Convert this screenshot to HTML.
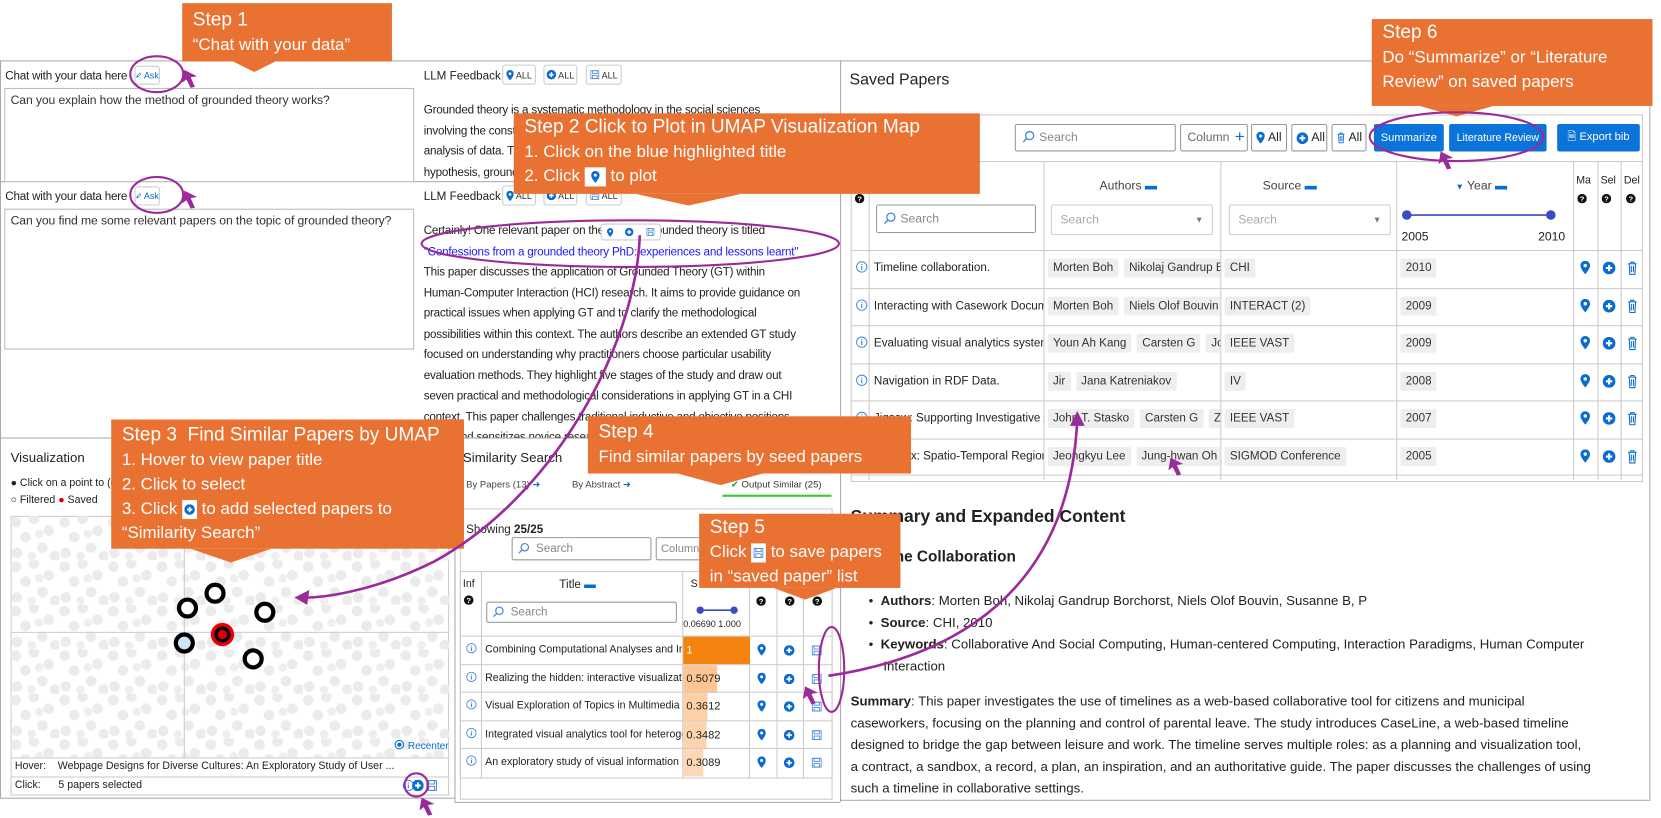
<!DOCTYPE html>
<html><head><meta charset="utf-8">
<style>
*{box-sizing:border-box;margin:0;padding:0}
html,body{width:1661px;height:818px;overflow:hidden;background:#fff}
#w{position:absolute;left:0;top:0;width:1568px;height:772px;transform:scale(1.0593);transform-origin:0 0;font-family:"Liberation Sans",sans-serif;color:#222;font-size:11.5px}
.a{position:absolute;white-space:nowrap}
.bx{position:absolute;border:1px solid #bbb}
.ln{position:absolute;background:#aaa}
.co{position:absolute;background:#E97132;color:#fff;font-size:16px;line-height:23px;padding:6px 10px;white-space:nowrap}
.co .t{font-size:18px}
.pill{position:absolute;border:1px solid #ccc;border-radius:3px;background:#fff;font-size:8.5px;color:#333;display:flex;align-items:center;justify-content:center;gap:2px;white-space:nowrap}
.ta{position:absolute;border:1px solid #bbb;background:#fff;padding:5px 5px;font-size:11.5px;color:#333;white-space:nowrap;overflow:hidden;letter-spacing:-0.1px}
.llm{position:absolute;font-size:11px;line-height:19.5px;color:#222;white-space:nowrap;overflow:hidden;letter-spacing:-0.2px}
.tag{display:inline-block;background:#eee;border-radius:2px;padding:3px 5px;margin-right:5px;font-size:11px;color:#333}
.btn{position:absolute;background:#0a74da;color:#fff;font-size:10.5px;display:flex;align-items:center;justify-content:center;border-radius:2px;white-space:nowrap}
.sb{position:absolute;border:1px solid #999;border-radius:2px;background:#fff;color:#888;font-size:11.5px;padding-left:22px;display:flex;align-items:center;white-space:nowrap}
svg.i{position:absolute}
</style></head><body><div id="w">
<svg width="0" height="0" style="position:absolute">
<defs>
<symbol id="pin" viewBox="0 0 10 14"><path d="M5 0C2.2 0 0 2.2 0 5c0 3.5 5 9 5 9s5-5.5 5-9C10 2.2 7.8 0 5 0z" fill="#0a6cd0"/><circle cx="5" cy="5" r="1.8" fill="#fff"/></symbol>
<symbol id="plus" viewBox="0 0 12 12"><circle cx="6" cy="6" r="6" fill="#0a6cd0"/><path d="M6 3v6M3 6h6" stroke="#fff" stroke-width="2"/></symbol>
<symbol id="trash" viewBox="0 0 10 14"><path d="M1 3h8M3.5 3V1.5h3V3M2 3l.6 10h4.8L8 3M4 5v6M6 5v6" fill="none" stroke="#0a6cd0" stroke-width="1"/></symbol>
<symbol id="save" viewBox="0 0 12 12"><rect x="1" y="1" width="10" height="10" fill="none" stroke="#4a8ad8" stroke-width="1"/><rect x="3" y="1" width="6" height="3.5" fill="none" stroke="#4a8ad8"/><rect x="3" y="7" width="6" height="4" fill="none" stroke="#4a8ad8"/></symbol>
<symbol id="info" viewBox="0 0 12 12"><circle cx="6" cy="6" r="5.3" fill="none" stroke="#3a86d8" stroke-width="1"/><path d="M6 5v4M6 3v1" stroke="#3a86d8" stroke-width="1.2"/></symbol>
<symbol id="q" viewBox="0 0 10 10"><circle cx="5" cy="5" r="5" fill="#111"/><text x="5" y="8" font-size="8" fill="#fff" text-anchor="middle" font-family="Liberation Sans" font-weight="bold">?</text></symbol>
<symbol id="mag" viewBox="0 0 12 12"><circle cx="7" cy="5" r="3.8" fill="none" stroke="#3a86d8" stroke-width="1.2"/><path d="M4.3 7.7L1 11" stroke="#3a86d8" stroke-width="1.3"/></symbol>
<symbol id="rk" viewBox="0 0 12 12"><path d="M2 10l2-4 4-4 2 0 0 2-4 4zM2 10l1-3 2 2z" fill="none" stroke="#0a6cd0" stroke-width="1"/></symbol>
<pattern id="dots" width="46" height="42" patternUnits="userSpaceOnUse">
<circle cx="5" cy="6" r="5" fill="#ebebeb"/><circle cx="22" cy="3" r="5" fill="#ebebeb"/><circle cx="36" cy="14" r="5" fill="#ebebeb"/><circle cx="14" cy="20" r="5" fill="#ebebeb"/><circle cx="30" cy="30" r="5" fill="#ebebeb"/><circle cx="6" cy="35" r="5" fill="#ebebeb"/><circle cx="42" cy="38" r="5" fill="#ebebeb"/><circle cx="20" cy="38" r="4" fill="#eeeeee"/><circle cx="27" cy="17" r="4" fill="#eeeeee"/>
</pattern>
</defs></svg>

<!-- frames -->
<div class="ln" style="left:0;top:57px;width:1557px;height:1px"></div>
<div class="ln" style="left:0;top:57px;width:1px;height:696px"></div>
<div class="ln" style="left:793px;top:57px;width:1px;height:700px"></div>
<div class="ln" style="left:1557px;top:57px;width:1px;height:698px"></div>
<div class="ln" style="left:793px;top:755px;width:765px;height:1px"></div>
<div class="ln" style="left:0;top:171px;width:793px;height:1px"></div>
<div class="ln" style="left:0;top:413px;width:793px;height:1px"></div>
<div class="ln" style="left:0;top:753px;width:429px;height:1px"></div>
<div class="ln" style="left:429px;top:413px;width:1px;height:344px"></div>
<div class="ln" style="left:429px;top:757px;width:364px;height:1px"></div>

<!-- chat 1 -->
<div class="a" style="left:5px;top:66px;font-size:11px;letter-spacing:-0.2px">Chat with your data here</div>
<div class="pill" style="left:127px;top:62px;width:24px;height:18px;color:#0a6cd0"><svg width="8" height="8"><use href="#rk"/></svg>Ask</div>
<div class="ta" style="left:4px;top:83px;width:387px;height:89px">Can you explain how the method of grounded theory works?</div>
<div class="a" style="left:400px;top:66px;font-size:11px">LLM Feedback</div>
<div class="pill" style="left:474px;top:61px;width:32px;height:19px"><svg width="7" height="10"><use href="#pin"/></svg>ALL</div>
<div class="pill" style="left:513px;top:61px;width:32px;height:19px"><svg width="9" height="9"><use href="#plus"/></svg>ALL</div>
<div class="pill" style="left:553px;top:61px;width:34px;height:19px"><svg width="9" height="9"><use href="#save"/></svg>ALL</div>
<div class="llm" style="left:400px;top:95px;width:390px;height:76px">Grounded theory is a systematic methodology in the social sciences<br>involving the construction of theories through methodical gathering and<br>analysis of data. This method begins with a question rather than a<br>hypothesis, grounded in the data collected from participants.</div>

<!-- chat 2 -->
<div class="a" style="left:5px;top:180px;font-size:11px;letter-spacing:-0.2px">Chat with your data here</div>
<div class="pill" style="left:127px;top:176px;width:24px;height:18px;color:#0a6cd0"><svg width="8" height="8"><use href="#rk"/></svg>Ask</div>
<div class="ta" style="left:4px;top:197px;width:387px;height:133px">Can you find me some relevant papers on the topic of grounded theory?</div>
<div class="a" style="left:400px;top:180px;font-size:11px">LLM Feedback</div>
<div class="pill" style="left:474px;top:175px;width:32px;height:19px"><svg width="7" height="10"><use href="#pin"/></svg>ALL</div>
<div class="pill" style="left:513px;top:175px;width:32px;height:19px"><svg width="9" height="9"><use href="#plus"/></svg>ALL</div>
<div class="pill" style="left:553px;top:175px;width:34px;height:19px"><svg width="9" height="9"><use href="#save"/></svg>ALL</div>
<div class="llm" style="left:400px;top:209px;width:390px;height:204px">Certainly! One relevant paper on the topic of grounded theory is titled<br><span style="color:#1a1aff">"Confessions from a grounded theory PhD: experiences and lessons learnt"</span><br>This paper discusses the application of Grounded Theory (GT) within<br>Human-Computer Interaction (HCI) research. It aims to provide guidance on<br>practical issues when applying GT and to clarify the methodological<br>possibilities within this context. The authors describe an extended GT study<br>focused on understanding why practitioners choose particular usability<br>evaluation methods. They highlight five stages of the study and draw out<br>seven practical and methodological considerations in applying GT in a CHI<br>context. This paper challenges traditional inductive and objective positions<br>of GT and sensitizes novice researchers</div>
<div class="pill" style="left:567px;top:211px;width:57px;height:16px;justify-content:space-around"><svg width="6" height="9"><use href="#pin"/></svg><svg width="8" height="8"><use href="#plus"/></svg><svg width="8" height="8"><use href="#save"/></svg></div>

<!-- visualization -->
<div class="a" style="left:10px;top:425px;font-size:12.5px">Visualization</div>
<div class="a" style="left:10px;top:451px;font-size:10px">● Click on a point to (de)select</div>
<div class="a" style="left:10px;top:467px;font-size:10px">○ Filtered <span style="color:#d00">●</span> Saved</div>
<div class="bx" style="left:10px;top:487px;width:414px;height:264px;border-color:#ccc"></div>
<svg class="i" style="left:10px;top:487px" width="414" height="228">
<rect width="414" height="228" fill="url(#dots)"/>
<line x1="164" y1="0" x2="164" y2="228" stroke="#ccc"/>
<line x1="0" y1="110" x2="414" y2="110" stroke="#ccc"/>
<g stroke="#000" stroke-width="4" fill="#fff">
<circle cx="193" cy="73" r="8"/><circle cx="167" cy="87" r="8"/><circle cx="240" cy="91" r="8"/><circle cx="164" cy="120" r="8" fill="#cfe4f7"/><circle cx="229" cy="135" r="8"/>
</g>
<circle cx="200" cy="112" r="10" fill="#d00" stroke="#e00" stroke-width="2"/><circle cx="200" cy="112" r="6" fill="#d00" stroke="#000" stroke-width="3"/>
<circle cx="367" cy="216" r="4" fill="none" stroke="#0a6cd0"/><circle cx="367" cy="216" r="2" fill="#0a6cd0"/>
<text x="375" y="220" font-size="9.5" fill="#0a6cd0" font-family="Liberation Sans">Recenter</text>
</svg>
<div class="ln" style="left:10px;top:715px;width:414px;height:1px;background:#ccc"></div>
<div class="ln" style="left:10px;top:733px;width:414px;height:1px;background:#ccc"></div>
<div class="a" style="left:14px;top:718px;font-size:10px">Hover:&nbsp;&nbsp;&nbsp;&nbsp;Webpage Designs for Diverse Cultures: An Exploratory Study of User ...</div>
<div class="a" style="left:14px;top:736px;font-size:10px">Click:&nbsp;&nbsp;&nbsp;&nbsp;&nbsp;&nbsp;5 papers selected</div>
<svg class="i" style="left:380px;top:736px" width="11" height="11"><use href="#info"/></svg>
<svg class="i" style="left:389px;top:736px" width="11" height="11"><use href="#plus"/></svg>
<svg class="i" style="left:402px;top:736px" width="11" height="11"><use href="#save"/></svg>

<!-- similarity -->
<div class="a" style="left:437px;top:425px;font-size:12.5px">Similarity Search</div>
<div class="a" style="left:440px;top:452px;font-size:9px;color:#444">By Papers (13) <span style="color:#0a6cd0">➜</span></div>
<div class="a" style="left:540px;top:452px;font-size:9px;color:#444">By Abstract <span style="color:#0a6cd0">➜</span></div>
<div class="a" style="left:690px;top:452px;font-size:9px;color:#333"><span style="color:#2a2">✔</span> Output Similar (25)</div>
<div class="ln" style="left:682px;top:467px;width:103px;height:2px;background:#3c3"></div>
<div class="bx" style="left:434px;top:480px;width:352px;height:275px;border-color:#ccc"></div>
<div class="a" style="left:440px;top:494px;font-size:11px">Showing <b>25/25</b></div>
<div class="sb" style="left:483px;top:507px;width:132px;height:22px;font-size:11px">Search</div>
<svg class="i" style="left:489px;top:512px" width="11" height="11"><use href="#mag"/></svg>
<div class="sb" style="left:619px;top:507px;width:45px;height:22px;padding-left:4px;font-size:10.5px;overflow:hidden">Column</div>
<div class="bx" style="left:434px;top:539px;width:352px;height:196px;border-color:#ccc"></div>
<div class="ln" style="left:454px;top:539px;width:1px;height:196px;background:#ccc"></div>
<div class="ln" style="left:644px;top:539px;width:1px;height:196px;background:#ccc"></div>
<div class="ln" style="left:707px;top:539px;width:1px;height:196px;background:#ccc"></div>
<div class="ln" style="left:733px;top:539px;width:1px;height:196px;background:#ccc"></div>
<div class="ln" style="left:758px;top:539px;width:1px;height:196px;background:#ccc"></div>
<div class="a" style="left:437px;top:546px;font-size:10px">Inf</div>
<svg class="i" style="left:438px;top:562px" width="9" height="9"><use href="#q"/></svg>
<div class="a" style="left:528px;top:546px;font-size:11px">Title <span style="color:#0a6cd0">▬</span></div>
<div class="sb" style="left:459px;top:568px;width:180px;height:20px;font-size:11px">Search</div>
<svg class="i" style="left:465px;top:572px" width="11" height="11"><use href="#mag"/></svg>
<div class="a" style="left:652px;top:546px;font-size:10px">S</div>
<svg class="i" style="left:657px;top:571px" width="40" height="10"><line x1="4" y1="5" x2="36" y2="5" stroke="#3a4cc0" stroke-width="1.5"/><circle cx="4" cy="5" r="3.5" fill="#3a4cc0"/><circle cx="36" cy="5" r="3.5" fill="#3a4cc0"/></svg>
<div class="a" style="left:645px;top:584px;font-size:8.5px">0.06690 1.000</div>
<svg class="i" style="left:714px;top:563px" width="9" height="9"><use href="#q"/></svg>
<svg class="i" style="left:741px;top:563px" width="9" height="9"><use href="#q"/></svg>
<svg class="i" style="left:767px;top:563px" width="9" height="9"><use href="#q"/></svg>

<div style="position:absolute;left:434px;top:600px;width:352px">
<div style="position:relative;height:26.5px;border-top:1px solid #ccc"><div style="position:absolute;left:211px;top:0;width:63px;height:26px;background:#F5830F"></div><svg class="i" style="left:6px;top:6px" width="10" height="10"><use href="#info"/></svg><div class="a" style="left:24px;top:7px;font-size:10px;width:186px;overflow:hidden">Combining Computational Analyses and Interviews</div><div class="a" style="left:214px;top:7px;font-size:10.5px;color:#fff">1</div><svg class="i" style="left:281px;top:7px" width="8" height="11"><use href="#pin"/></svg><svg class="i" style="left:306px;top:8px" width="10" height="10"><use href="#plus"/></svg><svg class="i" style="left:332px;top:8px" width="10" height="10"><use href="#save"/></svg></div>
<div style="position:relative;height:26.5px;border-top:1px solid #ccc"><div style="position:absolute;left:211px;top:0;width:32px;height:26px;background:#FDC592"></div><svg class="i" style="left:6px;top:6px" width="10" height="10"><use href="#info"/></svg><div class="a" style="left:24px;top:7px;font-size:10px;width:186px;overflow:hidden">Realizing the hidden: interactive visualization</div><div class="a" style="left:214px;top:7px;font-size:10.5px">0.5079</div><svg class="i" style="left:281px;top:7px" width="8" height="11"><use href="#pin"/></svg><svg class="i" style="left:306px;top:8px" width="10" height="10"><use href="#plus"/></svg><svg class="i" style="left:332px;top:8px" width="10" height="10"><use href="#save"/></svg></div>
<div style="position:relative;height:26.5px;border-top:1px solid #ccc"><div style="position:absolute;left:211px;top:0;width:23px;height:26px;background:#FDD0A8"></div><svg class="i" style="left:6px;top:6px" width="10" height="10"><use href="#info"/></svg><div class="a" style="left:24px;top:7px;font-size:10px;width:186px;overflow:hidden">Visual Exploration of Topics in Multimedia</div><div class="a" style="left:214px;top:7px;font-size:10.5px">0.3612</div><svg class="i" style="left:281px;top:7px" width="8" height="11"><use href="#pin"/></svg><svg class="i" style="left:306px;top:8px" width="10" height="10"><use href="#plus"/></svg><svg class="i" style="left:332px;top:8px" width="10" height="10"><use href="#save"/></svg></div>
<div style="position:relative;height:26.5px;border-top:1px solid #ccc"><div style="position:absolute;left:211px;top:0;width:22px;height:26px;background:#FDD4AE"></div><svg class="i" style="left:6px;top:6px" width="10" height="10"><use href="#info"/></svg><div class="a" style="left:24px;top:7px;font-size:10px;width:186px;overflow:hidden">Integrated visual analytics tool for heterogeneous</div><div class="a" style="left:214px;top:7px;font-size:10.5px">0.3482</div><svg class="i" style="left:281px;top:7px" width="8" height="11"><use href="#pin"/></svg><svg class="i" style="left:306px;top:8px" width="10" height="10"><use href="#plus"/></svg><svg class="i" style="left:332px;top:8px" width="10" height="10"><use href="#save"/></svg></div>
<div style="position:relative;height:26.5px;border-top:1px solid #ccc"><div style="position:absolute;left:211px;top:0;width:19px;height:26px;background:#FDD8B6"></div><svg class="i" style="left:6px;top:6px" width="10" height="10"><use href="#info"/></svg><div class="a" style="left:24px;top:7px;font-size:10px;width:186px;overflow:hidden">An exploratory study of visual information</div><div class="a" style="left:214px;top:7px;font-size:10.5px">0.3089</div><svg class="i" style="left:281px;top:7px" width="8" height="11"><use href="#pin"/></svg><svg class="i" style="left:306px;top:8px" width="10" height="10"><use href="#plus"/></svg><svg class="i" style="left:332px;top:8px" width="10" height="10"><use href="#save"/></svg></div>
</div>

<!-- saved papers -->
<div class="a" style="left:802px;top:67px;font-size:15px">Saved Papers</div>
<div class="bx" style="left:803px;top:108px;width:748px;height:347px;border-color:#ccc"></div>
<div class="sb" style="left:958px;top:117px;width:152px;height:26px">Search</div>
<svg class="i" style="left:965px;top:123px" width="12" height="12"><use href="#mag"/></svg>
<div class="sb" style="left:1114px;top:117px;width:64px;height:26px;padding-left:6px;color:#666">Column <span style="color:#0a6cd0;font-size:16px;margin-left:5px">+</span></div>
<div class="sb" style="left:1181px;top:117px;width:34px;height:26px;padding-left:4px;color:#222;gap:3px"><svg width="8" height="12"><use href="#pin"/></svg>All</div>
<div class="sb" style="left:1219px;top:117px;width:34px;height:26px;padding-left:4px;color:#222;gap:3px"><svg width="11" height="11"><use href="#plus"/></svg>All</div>
<div class="sb" style="left:1257px;top:117px;width:33px;height:26px;padding-left:4px;color:#222;gap:3px"><svg width="8" height="12"><use href="#trash"/></svg>All</div>
<div class="btn" style="left:1297px;top:117px;width:66px;height:26px">Summarize</div>
<div class="btn" style="left:1368px;top:117px;width:92px;height:26px;font-size:10px">Literature Review</div>
<div class="btn" style="left:1470px;top:117px;width:78px;height:26px">🗎 Export bib</div>
<div class="ln" style="left:803px;top:152px;width:748px;height:1px;background:#ccc"></div>
<div class="ln" style="left:820px;top:152px;width:1px;height:301px;background:#ccc"></div>
<div class="ln" style="left:985px;top:152px;width:1px;height:301px;background:#ccc"></div>
<div class="ln" style="left:1152px;top:152px;width:1px;height:301px;background:#ccc"></div>
<div class="ln" style="left:1318px;top:152px;width:1px;height:301px;background:#ccc"></div>
<div class="ln" style="left:1485px;top:152px;width:1px;height:301px;background:#ccc"></div>
<div class="ln" style="left:1508px;top:152px;width:1px;height:301px;background:#ccc"></div>
<div class="ln" style="left:1530px;top:152px;width:1px;height:301px;background:#ccc"></div>
<svg class="i" style="left:807px;top:183px" width="9" height="9"><use href="#q"/></svg>
<div class="sb" style="left:827px;top:193px;width:151px;height:27px">Search</div>
<svg class="i" style="left:834px;top:200px" width="12" height="12"><use href="#mag"/></svg>
<div class="a" style="left:1038px;top:170px;font-size:11.5px;color:#444">Authors <span style="color:#0a6cd0">▬</span></div>
<div class="sb" style="left:992px;top:193px;width:153px;height:29px;padding-left:8px;color:#aaa;border-color:#ccc">Search<span style="position:absolute;right:8px;font-size:8px;color:#777">▼</span></div>
<div class="a" style="left:1192px;top:170px;font-size:11.5px;color:#444">Source <span style="color:#0a6cd0">▬</span></div>
<div class="sb" style="left:1160px;top:193px;width:153px;height:29px;padding-left:8px;color:#aaa;border-color:#ccc">Search<span style="position:absolute;right:8px;font-size:8px;color:#777">▼</span></div>
<div class="a" style="left:1374px;top:170px;font-size:11.5px;color:#444"><span style="color:#0a6cd0;font-size:8px">▼</span> Year <span style="color:#0a6cd0">▬</span></div>
<svg class="i" style="left:1320px;top:196px" width="150" height="14"><line x1="8" y1="7" x2="144" y2="7" stroke="#3a4cc0" stroke-width="1.5"/><circle cx="8" cy="7" r="4.5" fill="#3a4cc0"/><circle cx="144" cy="7" r="4.5" fill="#3a4cc0"/></svg>
<div class="a" style="left:1323px;top:218px;font-size:11.5px">2005</div>
<div class="a" style="left:1452px;top:218px;font-size:11.5px">2010</div>
<div class="a" style="left:1488px;top:165px;font-size:10px">Ma</div><div class="a" style="left:1511px;top:165px;font-size:10px">Sel</div><div class="a" style="left:1533px;top:165px;font-size:10px">Del</div>
<svg class="i" style="left:1489px;top:183px" width="9" height="9"><use href="#q"/></svg>
<svg class="i" style="left:1512px;top:183px" width="9" height="9"><use href="#q"/></svg>
<svg class="i" style="left:1535px;top:183px" width="9" height="9"><use href="#q"/></svg>

<div style="position:absolute;left:803px;top:236px;width:748px">
<div style="position:relative;height:35.5px;border-top:1px solid #ccc"><svg class="i" style="left:5px;top:9px" width="11" height="12"><use href="#info"/></svg><div class="a" style="left:22px;top:10px;width:160px;overflow:hidden;font-size:11px">Timeline collaboration.</div><div class="a" style="left:186px;top:7px;width:163px;overflow:hidden"><span class="tag">Morten Boh</span><span class="tag">Nikolaj Gandrup Borchorst</span></div><div class="a" style="left:353px;top:7px"><span class="tag">CHI</span></div><div class="a" style="left:519px;top:7px"><span class="tag">2010</span></div><svg class="i" style="left:689px;top:9px" width="9" height="13"><use href="#pin"/></svg><svg class="i" style="left:710px;top:10px" width="12" height="12"><use href="#plus"/></svg><svg class="i" style="left:733px;top:9px" width="10" height="14"><use href="#trash"/></svg></div>
<div style="position:relative;height:35.5px;border-top:1px solid #ccc"><svg class="i" style="left:5px;top:9px" width="11" height="12"><use href="#info"/></svg><div class="a" style="left:22px;top:10px;width:160px;overflow:hidden;font-size:11px">Interacting with Casework Documents</div><div class="a" style="left:186px;top:7px;width:163px;overflow:hidden"><span class="tag">Morten Boh</span><span class="tag">Niels Olof Bouvin</span></div><div class="a" style="left:353px;top:7px"><span class="tag">INTERACT (2)</span></div><div class="a" style="left:519px;top:7px"><span class="tag">2009</span></div><svg class="i" style="left:689px;top:9px" width="9" height="13"><use href="#pin"/></svg><svg class="i" style="left:710px;top:10px" width="12" height="12"><use href="#plus"/></svg><svg class="i" style="left:733px;top:9px" width="10" height="14"><use href="#trash"/></svg></div>
<div style="position:relative;height:35.5px;border-top:1px solid #ccc"><svg class="i" style="left:5px;top:9px" width="11" height="12"><use href="#info"/></svg><div class="a" style="left:22px;top:10px;width:160px;overflow:hidden;font-size:11px">Evaluating visual analytics systems</div><div class="a" style="left:186px;top:7px;width:163px;overflow:hidden"><span class="tag">Youn Ah Kang</span><span class="tag">Carsten G</span><span class="tag">John Stasko</span></div><div class="a" style="left:353px;top:7px"><span class="tag">IEEE VAST</span></div><div class="a" style="left:519px;top:7px"><span class="tag">2009</span></div><svg class="i" style="left:689px;top:9px" width="9" height="13"><use href="#pin"/></svg><svg class="i" style="left:710px;top:10px" width="12" height="12"><use href="#plus"/></svg><svg class="i" style="left:733px;top:9px" width="10" height="14"><use href="#trash"/></svg></div>
<div style="position:relative;height:35.5px;border-top:1px solid #ccc"><svg class="i" style="left:5px;top:9px" width="11" height="12"><use href="#info"/></svg><div class="a" style="left:22px;top:10px;width:160px;overflow:hidden;font-size:11px">Navigation in RDF Data.</div><div class="a" style="left:186px;top:7px;width:163px;overflow:hidden"><span class="tag">Jir</span><span class="tag">Jana Katreniakov</span></div><div class="a" style="left:353px;top:7px"><span class="tag">IV</span></div><div class="a" style="left:519px;top:7px"><span class="tag">2008</span></div><svg class="i" style="left:689px;top:9px" width="9" height="13"><use href="#pin"/></svg><svg class="i" style="left:710px;top:10px" width="12" height="12"><use href="#plus"/></svg><svg class="i" style="left:733px;top:9px" width="10" height="14"><use href="#trash"/></svg></div>
<div style="position:relative;height:35.5px;border-top:1px solid #ccc"><svg class="i" style="left:5px;top:9px" width="11" height="12"><use href="#info"/></svg><div class="a" style="left:22px;top:10px;width:160px;overflow:hidden;font-size:11px">Jigsaw: Supporting Investigative Analysis</div><div class="a" style="left:186px;top:7px;width:163px;overflow:hidden"><span class="tag">John T. Stasko</span><span class="tag">Carsten G</span><span class="tag">Zhicheng</span></div><div class="a" style="left:353px;top:7px"><span class="tag">IEEE VAST</span></div><div class="a" style="left:519px;top:7px"><span class="tag">2007</span></div><svg class="i" style="left:689px;top:9px" width="9" height="13"><use href="#pin"/></svg><svg class="i" style="left:710px;top:10px" width="12" height="12"><use href="#plus"/></svg><svg class="i" style="left:733px;top:9px" width="10" height="14"><use href="#trash"/></svg></div>
<div style="position:relative;height:35.5px;border-top:1px solid #ccc;border-bottom:1px solid #ccc"><svg class="i" style="left:5px;top:9px" width="11" height="12"><use href="#info"/></svg><div class="a" style="left:22px;top:10px;width:160px;overflow:hidden;font-size:11px">SpIndex: Spatio-Temporal Region</div><div class="a" style="left:186px;top:7px;width:163px;overflow:hidden"><span class="tag">Jeongkyu Lee</span><span class="tag">Jung-hwan Oh</span></div><div class="a" style="left:353px;top:7px"><span class="tag">SIGMOD Conference</span></div><div class="a" style="left:519px;top:7px"><span class="tag">2005</span></div><svg class="i" style="left:689px;top:9px" width="9" height="13"><use href="#pin"/></svg><svg class="i" style="left:710px;top:10px" width="12" height="12"><use href="#plus"/></svg><svg class="i" style="left:733px;top:9px" width="10" height="14"><use href="#trash"/></svg></div>
</div>

<div class="a" style="left:803px;top:479px;font-size:16.5px;font-weight:bold">Summary and Expanded Content</div>
<div class="a" style="left:803px;top:518px;font-size:14.5px;font-weight:bold">Timeline Collaboration</div>
<div class="a" style="left:820px;top:557px;font-size:12.5px;line-height:20.5px">•&nbsp;&nbsp;<b>Authors</b>: Morten Boh, Nikolaj Gandrup Borchorst, Niels Olof Bouvin, Susanne B, P<br>•&nbsp;&nbsp;<b>Source</b>: CHI, 2010<br>•&nbsp;&nbsp;<b>Keywords</b>: Collaborative And Social Computing, Human-centered Computing, Interaction Paradigms, Human Computer<br>&nbsp;&nbsp;&nbsp;&nbsp;Interaction</div>
<div class="a" style="left:803px;top:652px;font-size:12.5px;line-height:20.5px"><b>Summary</b>: This paper investigates the use of timelines as a web-based collaborative tool for citizens and municipal<br>caseworkers, focusing on the planning and control of parental leave. The study introduces CaseLine, a web-based timeline<br>designed to bridge the gap between leisure and work. The timeline serves multiple roles: as a planning and visualization tool,<br>a contract, a sandbox, a record, a plan, an inspiration, and an authoritative guide. The paper discusses the challenges of using<br>such a timeline in collaborative settings.</div>

<!-- callouts -->
<div class="co" style="left:172px;top:3px;width:198px;height:55px;padding-top:4px"><span class="t">Step 1</span><br>“Chat with your data”</div>
<div class="co" style="left:485px;top:107px;width:440px;height:76px;padding-top:1px"><span class="t">Step 2 Click to Plot in UMAP Visualization Map</span><br>1. Click on the blue highlighted title<br>2. Click <span style="display:inline-block;width:20px;height:18px;background:#fff;vertical-align:middle;position:relative"><svg style="position:absolute;left:6px;top:3px" width="8" height="12"><use href="#pin"/></svg></span> to plot</div>
<div class="co" style="left:105px;top:396px;width:333px;height:122px;padding-top:3px"><span class="t">Step 3&nbsp; Find Similar Papers by UMAP</span><br>1. Hover to view paper title<br>2. Click to select<br>3. Click <span style="display:inline-block;width:14px;height:18px;background:#fff;vertical-align:middle;position:relative"><svg style="position:absolute;left:2px;top:4px" width="10" height="10"><use href="#plus"/></svg></span> to add selected papers to<br>“Similarity Search”</div>
<div class="co" style="left:555px;top:393px;width:305px;height:54px;padding-top:3px"><span class="t">Step 4</span><br>Find similar papers by seed papers</div>
<div class="co" style="left:660px;top:485px;width:190px;height:70px;padding-top:1px"><span class="t">Step 5</span><br>Click <span style="display:inline-block;width:14px;height:18px;background:#fff;vertical-align:middle;position:relative"><svg style="position:absolute;left:2px;top:4px" width="10" height="10"><use href="#save"/></svg></span> to save papers<br>in “saved paper” list</div>
<div class="co" style="left:1295px;top:18px;width:265px;height:82px;padding-top:1px"><span class="t">Step 6</span><br>Do “Summarize” or “Literature<br>Review” on saved papers</div>

<svg class="i" style="left:0;top:0" width="1568" height="772">
<g fill="#E97132">
<polygon points="220,58 260,58 240,68"/>
<polygon points="600,183 700,183 650,194"/>
<polygon points="180,518 256,518 218,531"/>
<polygon points="640,447 720,447 680,458"/>
<polygon points="730,555 790,555 760,566"/>
<polygon points="1340,100 1410,100 1375,110"/>
</g>
<g fill="none" stroke="#9b2a9b" stroke-width="2">
<ellipse cx="148" cy="70" rx="25" ry="17"/>
<ellipse cx="148" cy="184" rx="25" ry="17"/>
<ellipse cx="595" cy="230" rx="197" ry="22"/>
<ellipse cx="1375" cy="129" rx="82" ry="23"/>
<ellipse cx="785" cy="632" rx="12" ry="40"/>
<ellipse cx="393" cy="741" rx="11" ry="11"/>
<path d="M604 222 C 600 330 520 470 410 530 C 350 560 300 565 282 564" stroke-width="2.5"/>
<path d="M782 638 C 900 620 1010 560 1017 395" stroke-width="2.5"/>
</g>
<g fill="#9b2a9b">
<polygon points="278,564 292,557 290,571"/>
<polygon points="1017,388 1010,402 1024,402"/>
<polygon points="174,66 186,72 180,73 184,82 180,83 176,75 172,78"/>
<polygon points="174,180 186,186 180,187 184,196 180,197 176,189 172,192"/>
<polygon points="1360,143 1372,149 1366,150 1370,159 1366,160 1362,152 1358,155"/>
<polygon points="1105,432 1117,438 1111,439 1115,448 1111,449 1107,441 1103,444"/>
<polygon points="760,648 772,654 766,655 770,664 766,665 762,657 758,660"/>
<polygon points="398,753 410,759 404,760 408,769 404,770 400,762 396,765"/>
</g>
</svg>
</div></body></html>
